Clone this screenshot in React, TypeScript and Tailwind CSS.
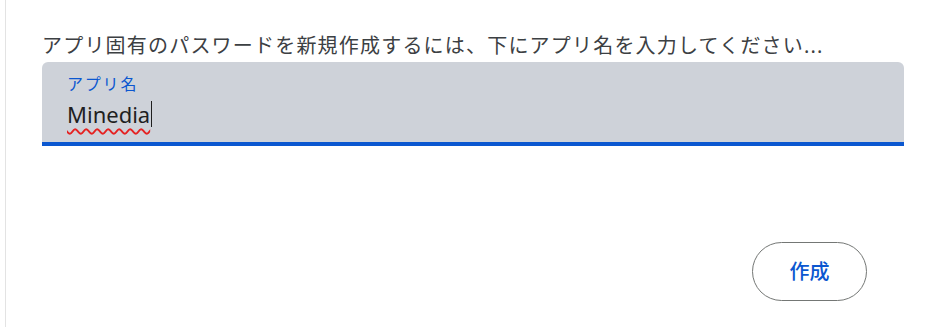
import React from "react";

export default function App() {
  return (
    <div
      className="h-[327px] w-[932px] bg-white pl-[5px]"
      style={{ fontFamily: '"Noto Sans", "Noto Sans CJK JP", sans-serif' }}
    >
      <div className="flex h-full flex-col border-l border-[#e3e3e3] pl-[36px] pr-[28px] pt-[31px]">
        <p className="text-[20px] leading-[30px] tracking-[1.2px] text-[#3c4043] whitespace-nowrap">
          アプリ固有のパスワードを新規作成するには、下にアプリ名を入力してください...
        </p>
        <div className="mt-[1px] flex h-[84px] flex-col rounded-t-[6px] border-b-[4px] border-[#0b57d0] bg-[#ced2d9] px-[25px] pt-[11px]">
          <span className="text-[16px] leading-[22px] tracking-[1.8px] text-[#0b57d0]">アプリ名</span>
          <div className="mt-[5px] flex items-center text-[22px] leading-[28px] text-[#1f1f1f]">
            <span className="underline decoration-wavy decoration-[#e52222] decoration-[1.5px] underline-offset-[5px]">
              Minedia
            </span>
            <span className="ml-[1px] inline-block h-[26px] w-[1px] bg-[#1f1f1f]" />
          </div>
        </div>
        <div className="mt-auto mb-[26px] flex justify-end pr-[37px]">
          <button className="h-[59px] w-[115px] rounded-full border border-[#747775] bg-white text-[20px] font-medium text-[#0b57d0]">
            作成
          </button>
        </div>
      </div>
    </div>
  );
}
